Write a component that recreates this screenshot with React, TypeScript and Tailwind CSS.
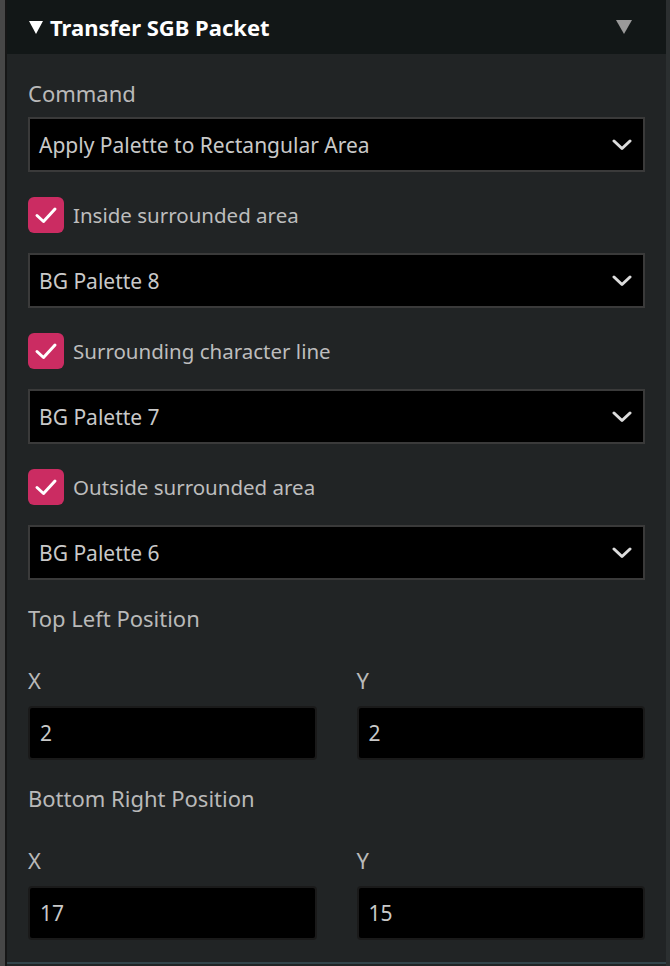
import React from 'react';

const font = { fontFamily: '"Noto Sans", "Open Sans", sans-serif' };

function Chevron() {
  return (
    <svg width="20" height="12" viewBox="0 0 20 12" className="shrink-0">
      <path d="M2 2 L10 9.5 L18 2" fill="none" stroke="#dcdcdc" strokeWidth="3" strokeLinecap="round" strokeLinejoin="round" />
    </svg>
  );
}

function Select({ value }: { value: string }) {
  return (
    <div className="flex h-[55px] items-center justify-between border-2 border-[#3a3a3a] bg-black pl-[9px] pr-[11px]">
      <span className="text-[21px] leading-[28px] text-[#c9c9c9]">{value}</span>
      <Chevron />
    </div>
  );
}

function Check({ label }: { label: string }) {
  return (
    <div className="flex items-center gap-[9px]">
      <div className="flex h-[36px] w-[36px] items-center justify-center rounded-[6px] bg-[#cb2c62]">
        <svg width="24" height="20" viewBox="0 0 24 20">
          <path d="M3 10.5 L9.5 16.5 L21 4" fill="none" stroke="#ffffff" strokeWidth="3" strokeLinecap="round" strokeLinejoin="round" />
        </svg>
      </div>
      <span className="text-[20.5px] leading-[28px] text-[#bdbdbd]">{label}</span>
    </div>
  );
}

function NumField({ label, value }: { label: string; value: string }) {
  return (
    <div className="flex flex-1 flex-col">
      <span className="text-[22px] leading-[28px] text-[#b9b9b9]">{label}</span>
      <div className="mt-[12px] flex h-[54px] items-center rounded-[4px] border-2 border-[#1a1a1a] bg-black pl-[10px]">
        <span className="text-[21px] leading-[28px] text-[#c9c9c9]">{value}</span>
      </div>
    </div>
  );
}

export default function App() {
  return (
    <div className="flex h-[966px] w-[670px] bg-[#212425]" style={font}>
      <div className="w-[5px] bg-[#474747]" />
      <div className="w-[2px] bg-[#161616]" />
      <div className="flex flex-1 flex-col">
        <div className="flex h-[54px] items-center justify-between bg-[#121717] pl-[22px] pr-[34px]">
          <div className="flex items-center gap-[7px]">
            <svg width="14" height="13" viewBox="0 0 14 13">
              <path d="M0 0 H14 L7 13 Z" fill="#ffffff" />
            </svg>
            <span className="text-[22px] font-bold leading-[30px] text-white">Transfer SGB Packet</span>
          </div>
          <svg width="16" height="14" viewBox="0 0 16 14">
            <path d="M0 0 H16 L8 14 Z" fill="#9a9a9a" />
          </svg>
        </div>
        <div className="flex flex-1 flex-col px-[21px]">
          <span className="mt-[25px] text-[22px] leading-[28px] text-[#b9b9b9]">Command</span>
          <div className="mt-[10px]">
            <Select value="Apply Palette to Rectangular Area" />
          </div>
          <div className="mt-[25px]">
            <Check label="Inside surrounded area" />
          </div>
          <div className="mt-[20px]">
            <Select value="BG Palette 8" />
          </div>
          <div className="mt-[25px]">
            <Check label="Surrounding character line" />
          </div>
          <div className="mt-[20px]">
            <Select value="BG Palette 7" />
          </div>
          <div className="mt-[25px]">
            <Check label="Outside surrounded area" />
          </div>
          <div className="mt-[20px]">
            <Select value="BG Palette 6" />
          </div>
          <span className="mt-[24px] text-[22px] leading-[28px] text-[#b9b9b9]">Top Left Position</span>
          <div className="mt-[34px] flex gap-[40px]">
            <NumField label="X" value="2" />
            <NumField label="Y" value="2" />
          </div>
          <span className="mt-[24px] text-[22px] leading-[28px] text-[#b9b9b9]">Bottom Right Position</span>
          <div className="mt-[34px] flex gap-[40px]">
            <NumField label="X" value="17" />
            <NumField label="Y" value="15" />
          </div>
        </div>
        <div className="mb-[2px] h-[2px] bg-[#33454b]" />
      </div>
      <div className="w-[4px] bg-[#2b2f30]" />
    </div>
  );
}
